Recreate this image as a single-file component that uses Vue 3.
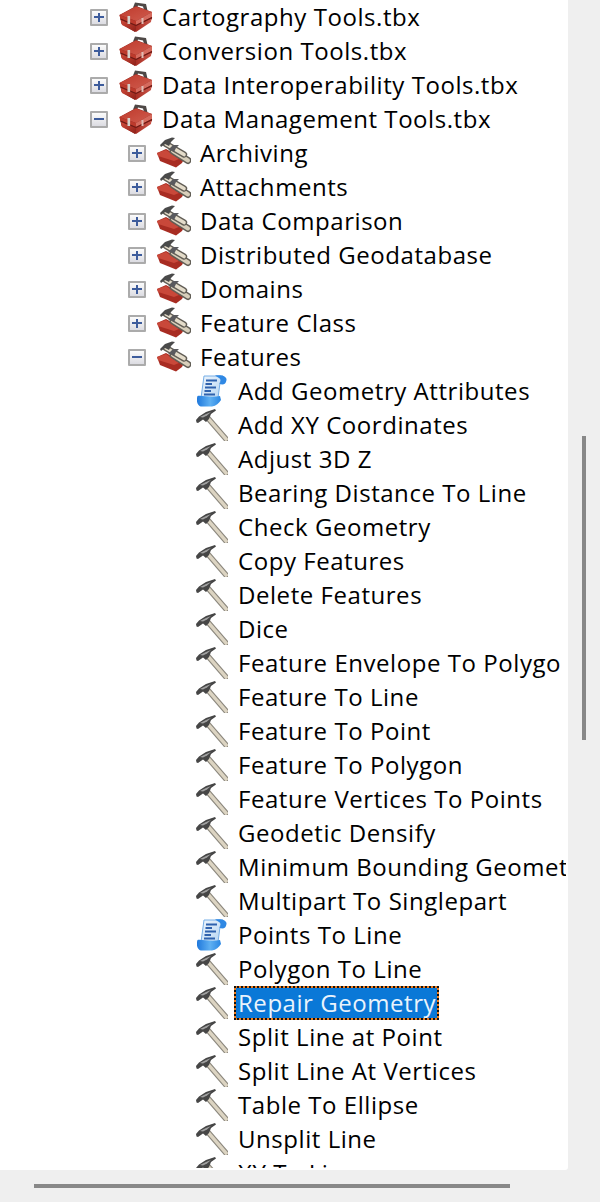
<script setup>
const rows = [
  { t: 'Cartography Tools.tbx', d: 0, i: 'box', e: '+' },
  { t: 'Conversion Tools.tbx', d: 0, i: 'box', e: '+' },
  { t: 'Data Interoperability Tools.tbx', d: 0, i: 'box', e: '+' },
  { t: 'Data Management Tools.tbx', d: 0, i: 'box', e: '-' },
  { t: 'Archiving', d: 1, i: 'set', e: '+' },
  { t: 'Attachments', d: 1, i: 'set', e: '+' },
  { t: 'Data Comparison', d: 1, i: 'set', e: '+' },
  { t: 'Distributed Geodatabase', d: 1, i: 'set', e: '+' },
  { t: 'Domains', d: 1, i: 'set', e: '+' },
  { t: 'Feature Class', d: 1, i: 'set', e: '+' },
  { t: 'Features', d: 1, i: 'set', e: '-' },
  { t: 'Add Geometry Attributes', d: 2, i: 'script' },
  { t: 'Add XY Coordinates', d: 2, i: 'tool' },
  { t: 'Adjust 3D Z', d: 2, i: 'tool' },
  { t: 'Bearing Distance To Line', d: 2, i: 'tool' },
  { t: 'Check Geometry', d: 2, i: 'tool' },
  { t: 'Copy Features', d: 2, i: 'tool' },
  { t: 'Delete Features', d: 2, i: 'tool' },
  { t: 'Dice', d: 2, i: 'tool' },
  { t: 'Feature Envelope To Polygo', d: 2, i: 'tool' },
  { t: 'Feature To Line', d: 2, i: 'tool' },
  { t: 'Feature To Point', d: 2, i: 'tool' },
  { t: 'Feature To Polygon', d: 2, i: 'tool' },
  { t: 'Feature Vertices To Points', d: 2, i: 'tool' },
  { t: 'Geodetic Densify', d: 2, i: 'tool' },
  { t: 'Minimum Bounding Geomet', d: 2, i: 'tool' },
  { t: 'Multipart To Singlepart', d: 2, i: 'tool' },
  { t: 'Points To Line', d: 2, i: 'script' },
  { t: 'Polygon To Line', d: 2, i: 'tool' },
  { t: 'Repair Geometry', d: 2, i: 'tool', sel: true },
  { t: 'Split Line at Point', d: 2, i: 'tool' },
  { t: 'Split Line At Vertices', d: 2, i: 'tool' },
  { t: 'Table To Ellipse', d: 2, i: 'tool' },
  { t: 'Unsplit Line', d: 2, i: 'tool' },
  { t: 'XY To Line', d: 2, i: 'tool' },
]
</script>

<template>
  <div class="page">
    <svg class="defs" width="0" height="0" aria-hidden="true">
      <defs>
        <linearGradient id="gl" x1="0" y1="0" x2="1" y2="1">
          <stop offset="0" stop-color="#cf4a3a" /><stop offset="1" stop-color="#8f2018" />
        </linearGradient>
        <linearGradient id="gr" x1="0" y1="0" x2="1" y2="0">
          <stop offset="0" stop-color="#a92e24" /><stop offset="1" stop-color="#c9564a" />
        </linearGradient>
        <linearGradient id="gt" x1="0" y1="0" x2="1" y2="1">
          <stop offset="0" stop-color="#bf3a2c" /><stop offset="1" stop-color="#cf5c4e" />
        </linearGradient>
        <linearGradient id="gs" x1="0" y1="0" x2="1" y2="1">
          <stop offset="0" stop-color="#eef5fc" /><stop offset="1" stop-color="#b4d4f2" />
        </linearGradient>
        <linearGradient id="gc" x1="0" y1="0" x2="1" y2="0">
          <stop offset="0" stop-color="#1f78dc" /><stop offset="0.55" stop-color="#5fb0f2" /><stop offset="1" stop-color="#2a86e2" />
        </linearGradient>
      </defs>
      <symbol id="tool" viewBox="0 0 32 32">
        <path d="M11 8 L30 30" stroke="#8c887e" stroke-width="5.6" stroke-linecap="square" fill="none" />
        <path d="M11 8 L30 30" stroke="#dcd4c2" stroke-width="3.4" stroke-linecap="square" fill="none" />
        <path d="M0 11 L3 7.5 L10 3 L19 0 L20 1.5 L15 5 L13 10 L10 13 L7 10.5 L2 14 L0.5 13.5 Z" fill="#464646" />
        <path d="M4 8 L10 5 L15 3 L11 6.5 L7 8.5 Z" fill="#a0a0a0" />
      </symbol>
      <symbol id="box" viewBox="0 0 34 32">
        <path d="M14 6.5 L16 1.5 L27 3 L28.5 9.5 L25 9 L24 5.5 L19 4.5 L18 7 Z" fill="#4e4846" />
        <path d="M0.5 14 L17 5 L33 11 L33 18 L16 31 L2.5 23 Z" fill="#8e2820" />
        <path d="M0.5 14 L17 5.5 L33 11 L17 20 Z" fill="url(#gt)" />
        <path d="M0.5 14 L17 20 L17 24 L1.5 18 Z" fill="#bc3a2c" />
        <path d="M17 20 L33 11 L33 16 L17 24 Z" fill="#d56a5d" />
        <path d="M2 19 L16.5 25 L16.5 31 L3 24 Z" fill="url(#gl)" />
        <path d="M17 25 L32.5 17.5 L32 21 L17 31 Z" fill="url(#gr)" />
        <path d="M1.5 18 L17 24.5 L33 16.5" stroke="#6e1a14" stroke-width="1.1" fill="none" />
        <path d="M8.5 15 h2.6 v8 h-2.6 Z" fill="#d4d0ca" />
        <path d="M22.5 17 h2 v6 h-2 Z" fill="#e0bcb4" />
      </symbol>
      <symbol id="set" viewBox="0 0 34 32">
        <path d="M0 16 L9 12 L27 22 L25 26 L19 30.5 L3 24 Z" fill="#a82c22" />
        <path d="M0 16 L9 13 L22 22 L17 24 L1 19 Z" fill="#c9483a" />
        <path d="M16 14 L31 23.5" stroke="#625e56" stroke-width="7" stroke-linecap="round" />
        <path d="M16 14 L31 23.5" stroke="#d8cfbb" stroke-width="4" stroke-linecap="round" />
        <path d="M9 7 L27 17.5" stroke="#625e56" stroke-width="6.4" stroke-linecap="round" />
        <path d="M9 7 L27 17.5" stroke="#e4dcca" stroke-width="3.6" stroke-linecap="round" />
        <path d="M3 8 L8 3 L15 0.5 L18 1 L14 5 L12 9 L8 7 L4 10 Z" fill="#4a4a4a" />
        <path d="M11 13 L16 8 L22 8 L19 11 L17 15 L14 13 Z" fill="#5a5a5e" />
      </symbol>
      <symbol id="script" viewBox="0 0 30 32">
        <path d="M7 1 H26 L23 8 L21 23 H4 Z" fill="url(#gs)" stroke="#76aee6" stroke-width="1" />
        <path d="M18 0.5 C23 -0.5 30 0.5 29.5 5 C29 9.5 26 10 22.5 9 C24 7 24 4 22 3 Z" fill="#2f88e4" />
        <path d="M0.5 21 C4 20 14 23 23 21 L24 25 C22 28 19 31 15 31.5 H5 C0 31.5 -1 25 0.5 21 Z" fill="url(#gc)" />
        <path d="M9 5.5 H20 M8.5 9 H15 M8 12.5 H19 M7.5 16 H14 M7 19.5 H18" stroke="#2f62ae" stroke-width="1.9" />
      </symbol>
    </svg>

    <div class="panel">
      <div class="tree">
        <div v-for="r in rows" :key="r.t" class="row" :class="'depth' + r.d">
          <span class="exp" v-if="r.e">
            <i class="h"></i><i v-if="r.e === '+'" class="v"></i>
          </span>
          <svg class="icon" :class="r.i"><use :href="'#' + r.i" /></svg>
          <span class="label" :class="{ sel: r.sel }">{{ r.t }}</span>
        </div>
      </div>
    </div>
    <div class="vbar"></div>
    <div class="hbar"></div>
  </div>
</template>

<style>
html, body { margin: 0; background: #efefef; }
</style>

<style scoped>
.page {
  position: relative;
  width: 600px;
  height: 1202px;
  background: #efefef;
  overflow: hidden;
  font-family: "Open Sans", "Noto Sans", sans-serif;
}
.defs { position: absolute; }
.panel {
  width: 568px;
  height: 1170px;
  background: #fff;
  border-bottom-right-radius: 3px;
  overflow: hidden;
}
.tree {
  width: 566px;
  height: 1168px;
  overflow: hidden;
}
.row {
  display: flex;
  align-items: center;
  height: 34px;
  white-space: nowrap;
  box-sizing: border-box;
}
.depth0 { padding-left: 90px; }
.depth1 { padding-left: 128px; }
.depth2 { padding-left: 196px; }
.exp {
  position: relative;
  flex: none;
  width: 18px;
  height: 17px;
  box-sizing: border-box;
  border: 2px solid #ababab;
  border-radius: 1px;
  background: linear-gradient(#fbfbfb, #dcdce2);
  margin-right: 11px;
}
.exp .h { position: absolute; left: 2px; right: 2px; top: 5.5px; height: 2px; background: #3d5c9c; }
.exp .v { position: absolute; top: 2px; bottom: 2px; left: 6px; width: 2px; background: #3d5c9c; }
.icon { flex: none; width: 34px; height: 32px; filter: blur(0.4px); }
.icon.tool { width: 32px; }
.icon.script { width: 30px; margin-left: 1px; margin-right: 1px; }
.label {
  font-size: 24px;
  line-height: 32px;
  color: #000;
  margin-left: 7px;
  padding: 0 2px;
  letter-spacing: 0.55px;
}
.depth2 .label { margin-left: 8px; }
.label.sel {
  background: #0a78d7;
  color: #e9f3fc;
  outline: 2px dotted #111;
  outline-offset: -2px;
  box-shadow: inset 0 0 0 2px #f07d1e;
  margin-left: 6px;
  padding: 0 3px 0 4px;
  height: 34px;
  line-height: 34px;
}
.vbar {
  position: absolute;
  left: 582px;
  top: 436px;
  width: 4px;
  height: 304px;
  background: #888;
}
.hbar {
  position: absolute;
  left: 34px;
  top: 1184px;
  width: 476px;
  height: 4px;
  background: #888;
}
</style>
